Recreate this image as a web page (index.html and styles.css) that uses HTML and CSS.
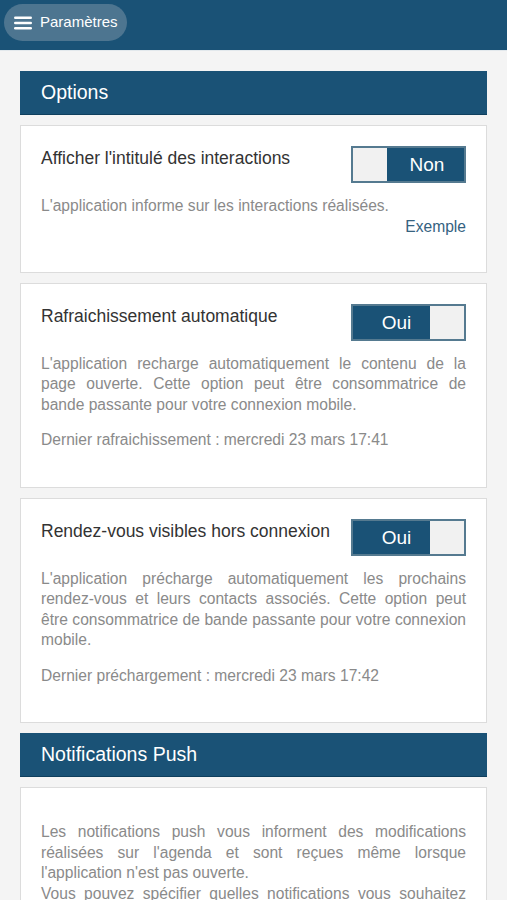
FILE: index.html
```html
<!DOCTYPE html>
<html lang="fr">
<head>
<meta charset="utf-8">
<title>Paramètres</title>
<link rel="stylesheet" href="styles.css">
</head>
<body>
<header class="topbar">
  <button class="menu-btn" type="button">
    <svg class="menu-icon" width="18" height="14" viewBox="0 0 18 14" aria-hidden="true">
      <rect x="0" y="0.5" width="18" height="2.6" rx="1.3" fill="#fff"/>
      <rect x="0" y="5.7" width="18" height="2.6" rx="1.3" fill="#fff"/>
      <rect x="0" y="10.9" width="18" height="2.6" rx="1.3" fill="#fff"/>
    </svg>
    <span class="menu-label">Paramètres</span>
  </button>
</header>

<main class="content">
  <h2 class="section-title">Options</h2>

  <section class="card">
    <div class="card-head">
      <span class="card-title">Afficher l'intitulé des interactions</span>
      <div class="toggle toggle-off">
        <span class="knob"></span>
        <span class="toggle-label">Non</span>
      </div>
    </div>
    <p class="desc desc-tight">L'application informe sur les interactions réalisées.</p>
    <div class="example-row"><a class="example">Exemple</a></div>
  </section>

  <section class="card">
    <div class="card-head">
      <span class="card-title">Rafraichissement automatique</span>
      <div class="toggle toggle-on">
        <span class="toggle-label">Oui</span>
        <span class="knob"></span>
      </div>
    </div>
    <p class="desc">L'application recharge automatiquement le contenu de la page ouverte. Cette option peut être consommatrice de bande passante pour votre connexion mobile.</p>
    <p class="desc">Dernier rafraichissement : mercredi 23 mars 17:41</p>
  </section>

  <section class="card">
    <div class="card-head">
      <span class="card-title">Rendez-vous visibles hors connexion</span>
      <div class="toggle toggle-on">
        <span class="toggle-label">Oui</span>
        <span class="knob"></span>
      </div>
    </div>
    <p class="desc">L'application précharge automatiquement les prochains rendez-vous et leurs contacts associés. Cette option peut être consommatrice de bande passante pour votre connexion mobile.</p>
    <p class="desc">Dernier préchargement : mercredi 23 mars 17:42</p>
  </section>

  <h2 class="section-title">Notifications Push</h2>

  <section class="card card-push">
    <p class="desc desc-tight">Les notifications push vous informent des modifications réalisées sur l'agenda et sont reçues même lorsque l'application n'est pas ouverte.<br>Vous pouvez spécifier quelles notifications vous souhaitez recevoir.</p>
  </section>
</main>
</body>
</html>
```

FILE: styles.css
```css
* { box-sizing: border-box; }

html, body {
  margin: 0;
  padding: 0;
}

body {
  background: #f4f4f4;
  font-family: "Liberation Sans", Arial, sans-serif;
  color: #333;
}

.topbar {
  height: 51px;
  background: #1a5276;
  padding: 4px 0 0 4px;
  border-bottom: 1px solid #e2e8ec;
}

.menu-btn {
  display: flex;
  align-items: center;
  gap: 8px;
  height: 37px;
  width: 123px;
  padding: 0 0 0 10px;
  border: none;
  border-radius: 19px;
  background: #4d7590;
  color: #fff;
  font-family: "Liberation Sans", Arial, sans-serif;
  font-size: 15px;
  cursor: pointer;
}

.menu-icon { display: block; flex: none; }

.menu-label { line-height: 1; margin-top: -3px; }

.content {
  padding: 20px 20px 20px 20px;
  display: flex;
  flex-direction: column;
  gap: 10px;
}

.section-title {
  margin: 0;
  height: 44px;
  background: #1a5276;
  color: #fff;
  font-weight: normal;
  font-size: 19.5px;
  line-height: 42px;
  padding-left: 21px;
  border-bottom: 1px solid #0f3f5d;
}

.card {
  background: #fff;
  border: 1px solid #dcdcdc;
  padding: 20px 20px 20px 20px;
}

.card-head {
  display: flex;
  justify-content: space-between;
  align-items: flex-start;
  gap: 10px;
}

.card-title {
  font-size: 17.5px;
  line-height: 25px;
  color: #333;
}

.toggle {
  flex: none;
  display: flex;
  width: 115px;
  height: 37px;
  border: 2px solid #557a90;
  background: #1a5276;
}

.knob {
  width: 34px;
  background: #f1f1f1;
}

.toggle-label {
  flex: 1;
  color: #fff;
  font-size: 19px;
  line-height: 33px;
  text-align: center;
}

.toggle-on .toggle-label { padding-left: 10px; }

.toggle-off .toggle-label { padding-left: 3px; }

.desc {
  margin: 13px 0 15px 0;
  font-size: 15.6px;
  line-height: 20.5px;
  color: #8a8a8a;
  text-align: justify;
}

.desc + .desc { margin-top: 0; }

.desc:last-child { margin-bottom: 16px; }

.desc-tight,
.desc-tight:last-child { margin-bottom: 0; }

.example-row {
  text-align: right;
  line-height: 20px;
  font-size: 15.6px;
  margin-bottom: 15px;
}

.example {
  color: #35627f;
  text-decoration: none;
}

.card-push {
  padding-top: 34px;
  padding-bottom: 20px;
}

.card-push .desc { margin-top: 0; }
```
